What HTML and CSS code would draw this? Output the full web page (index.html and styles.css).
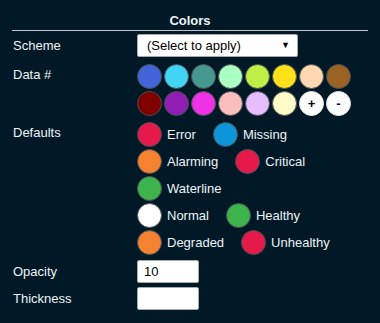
FILE: index.html
```html
<!DOCTYPE html>
<html lang="en">
<head>
  <meta charset="UTF-8">
  <meta name="viewport" content="width=device-width, initial-scale=1.0">
  <title>Colors</title>
  <link rel="stylesheet" href="styles.css">
</head>
<body>
  <div class="panel">
    <h3 class="title">Colors</h3>

    <div class="form">
      <label class="label">Scheme</label>
      <div class="field">
        <span class="select-wrap">
          <select class="select">
            <option>(Select to apply)</option>
          </select>
        </span>
      </div>

      <label class="label top gap-data">Data #</label>
      <div class="swatches gap-data">
        <span class="dot" style="background:#4363d8"></span>
        <span class="dot" style="background:#42d4f4"></span>
        <span class="dot" style="background:#469990"></span>
        <span class="dot" style="background:#aaffc3"></span>
        <span class="dot" style="background:#bfef45"></span>
        <span class="dot" style="background:#ffe119"></span>
        <span class="dot" style="background:#ffd8b1"></span>
        <span class="dot" style="background:#9a6324"></span>
        <span class="dot" style="background:#800000"></span>
        <span class="dot" style="background:#911eb4"></span>
        <span class="dot" style="background:#f032e6"></span>
        <span class="dot" style="background:#fabebe"></span>
        <span class="dot" style="background:#e6beff"></span>
        <span class="dot" style="background:#fffac8"></span>
        <button class="dot btn">+</button>
        <button class="dot btn">-</button>
      </div>

      <label class="label top gap-def">Defaults</label>
      <div class="defaults gap-def">
        <div class="def-row">
          <span class="item"><span class="dot" style="background:#e6194b"></span>Error</span>
          <span class="item"><span class="dot" style="background:#0c96d9"></span>Missing</span>
        </div>
        <div class="def-row">
          <span class="item"><span class="dot" style="background:#f58231"></span>Alarming</span>
          <span class="item"><span class="dot" style="background:#e6194b"></span>Critical</span>
        </div>
        <div class="def-row">
          <span class="item"><span class="dot" style="background:#3cb44b"></span>Waterline</span>
        </div>
        <div class="def-row">
          <span class="item"><span class="dot" style="background:#ffffff"></span>Normal</span>
          <span class="item"><span class="dot" style="background:#3cb44b"></span>Healthy</span>
        </div>
        <div class="def-row">
          <span class="item"><span class="dot" style="background:#f58231"></span>Degraded</span>
          <span class="item"><span class="dot" style="background:#e6194b"></span>Unhealthy</span>
        </div>
      </div>

      <label class="label gap-op">Opacity</label>
      <div class="field gap-op"><input class="input" type="text" value="10"></div>

      <label class="label">Thickness</label>
      <div class="field"><input class="input" type="text" value=""></div>
    </div>
  </div>
</body>
</html>
```

FILE: styles.css
```css
body {
  margin: 0;
  background: #011927;
  color: #eef3f6;
  font-family: "Liberation Sans", Arial, sans-serif;
  font-size: 13px;
}
.panel {
  padding: 0 12px;
}
.title {
  margin: 13px 0 0;
  padding-bottom: 2px;
  font-size: 13px;
  line-height: 15px;
  font-weight: bold;
  text-align: center;
  border-bottom: 1px solid #c2c6c9;
}
.form {
  display: grid;
  grid-template-columns: 125px 1fr;
  row-gap: 4px;
  margin-top: 3px;
  align-items: center;
}
.label {
  padding-left: 1px;
  line-height: 15px;
}
.label.top {
  align-self: start;
  padding-top: 3px;
}
.gap-data {
  margin-top: 3px;
}
.gap-def {
  margin-top: 2px;
}
.gap-op {
  margin-top: 1px;
}
.select-wrap {
  position: relative;
  display: inline-block;
}
.select-wrap::after {
  content: "\25BC";
  position: absolute;
  right: 8px;
  top: 6px;
  font-size: 9px;
  color: #000;
  pointer-events: none;
}
.select {
  appearance: none;
  -webkit-appearance: none;
  width: 161px;
  height: 23px;
  padding: 0 0 0 9px;
  border: 1px solid #a9a9a9;
  border-radius: 2px;
  background: #fff;
  color: #000;
  font-family: inherit;
  font-size: 13px;
}
.swatches {
  display: grid;
  grid-template-columns: repeat(8, 25px);
  gap: 2px;
}
.dot {
  box-sizing: border-box;
  display: inline-block;
  width: 25px;
  height: 25px;
  border-radius: 50%;
  border: 1px solid #4a4f52;
  flex-shrink: 0;
}
.btn {
  padding: 0;
  background: #fff;
  border-color: #e6e6e6;
  color: #000;
  font-family: inherit;
  font-size: 13px;
  font-weight: bold;
  line-height: 1;
  cursor: pointer;
}
.defaults {
  display: flex;
  flex-direction: column;
  gap: 2px;
}
.def-row {
  display: flex;
  gap: 17px;
}
.item {
  display: flex;
  align-items: center;
  gap: 5px;
}
.input {
  box-sizing: border-box;
  width: 62px;
  height: 23px;
  padding: 0 6px;
  border: 1px solid #a9a9a9;
  border-radius: 2px;
  background: #fff;
  color: #000;
  font-family: inherit;
  font-size: 13px;
}
```
